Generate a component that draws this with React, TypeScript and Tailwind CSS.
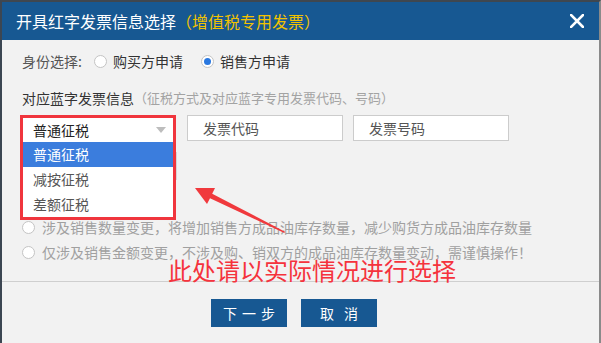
import React from 'react';

const Radio = ({ checked = false }: { checked?: boolean }) => (
  <span className="w-[13px] h-[13px] rounded-full border border-[#c4c4c4] bg-white flex items-center justify-center shrink-0">
    {checked && <span className="w-[7px] h-[7px] rounded-full bg-[#2a78e0]"></span>}
  </span>
);

const App = () => {
  const options = ['普通征税', '减按征税', '差额征税'];

  return (
    <div className="relative w-[601px] h-[343px] overflow-hidden bg-[#f2f2f2] border-t-2 border-l-2 border-r-2 border-t-[#3f4750] border-l-[#3c4652] border-r-[#8a8a8a] font-['Noto_Sans_CJK_SC',sans-serif]">
      {/* title bar */}
      <div className="h-[38px] bg-[#175892] flex items-center justify-between pl-[14px] pr-[15px]">
        <div className="text-[16px] leading-[20px] text-white">
          开具红字发票信息选择<span className="text-[#f2c200]">（增值税专用发票）</span>
        </div>
        <svg width="14" height="14" viewBox="0 0 14 14">
          <path d="M1 1 L13 13 M13 1 L1 13" stroke="white" strokeWidth="2.6" strokeLinecap="square" />
        </svg>
      </div>

      <div className="px-[20px]">
        <div className="mt-[11px] h-[20px] flex items-center text-[14px]">
          <span className="w-[72px] text-[#555]">身份选择:</span>
          <Radio />
          <span className="ml-[6px] text-[#333]">购买方申请</span>
          <span className="ml-[18px]"><Radio checked /></span>
          <span className="ml-[6px] text-[#333]">销售方申请</span>
        </div>

        <div className="mt-[17px] h-[20px] flex items-center">
          <span className="text-[14px] text-[#333]">对应蓝字发票信息</span>
          <span className="text-[13px] text-[#a3a3a3]">（征税方式及对应蓝字专用发票代码、号码）</span>
        </div>

        <div className="mt-[7px] h-[26px] flex items-start">
          <div className="relative w-[152px] h-[26px]">
            <div className="absolute left-[154px] top-[37px] w-px h-[28px] bg-[#d6d6d6]"></div>
            <div className="absolute -left-[2px] top-0 z-10 w-[156px] h-[105px] border-[3px] border-[#f0353d] bg-white">
              <div className="h-[24px] flex items-center justify-between pl-[10px] pr-[7px] text-[14px] text-[#222]">
                <span>普通征税</span>
                <span className="w-0 h-0 border-l-[5px] border-r-[5px] border-t-[6px] border-l-transparent border-r-transparent border-t-[#bdbdbd]"></span>
              </div>
              {options.map((o, i) => (
                <div
                  key={o}
                  className={
                    i === 0
                      ? 'h-[25px] flex items-center pl-[10px] text-[14px] bg-[#3b7ddd] text-white'
                      : 'h-[25px] flex items-center pl-[10px] text-[14px] text-[#555]'
                  }
                >
                  {o}
                </div>
              ))}
            </div>
          </div>
          <div className="ml-[13px] w-[156px] h-[26px] border border-[#cccccc] bg-white flex items-center pl-[15px] text-[14px] text-[#555]">
            发票代码
          </div>
          <div className="ml-[10px] w-[156px] h-[26px] border border-[#cccccc] bg-white flex items-center pl-[15px] text-[14px] text-[#555]">
            发票号码
          </div>
        </div>

        <div className="mt-[74px] text-[14px] text-[#a0a0a0]">
          <div className="h-[25px] flex items-center">
            <Radio />
            <span className="ml-[7px]">涉及销售数量变更，将增加销售方成品油库存数量，减少购货方成品油库存数量</span>
          </div>
          <div className="h-[25px] flex items-center">
            <Radio />
            <span className="ml-[7px]">仅涉及销售金额变更，不涉及购、销双方的成品油库存数量变动，需谨慎操作！</span>
          </div>
        </div>
      </div>

      <div className="mt-[16px] border-t border-[#cfcfcf] pt-[17px] flex justify-center gap-[14px] pr-[13px]">
        <button className="w-[76px] h-[28px] bg-[#175892] text-white text-[14px] flex items-center justify-center gap-[5px]">
          <span>下</span><span>一</span><span>步</span>
        </button>
        <button className="w-[76px] h-[28px] bg-[#175892] text-white text-[14px] flex items-center justify-center gap-[10px]">
          <span>取</span><span>消</span>
        </button>
      </div>

      {/* annotation */}
      <div className="absolute left-[166px] top-[255px] text-[24px] leading-[26px] text-[#f5333d]">此处请以实际情况进行选择</div>
      <svg className="absolute left-0 top-0 pointer-events-none" width="601" height="343" viewBox="0 0 601 343">
        <polygon
          points="193,186 213,186 210.2,191.8 283,229.7 282.3,230.9 208,196.2 205,202"
          fill="#f0393d"
        />
      </svg>
    </div>
  );
};

export default App;
